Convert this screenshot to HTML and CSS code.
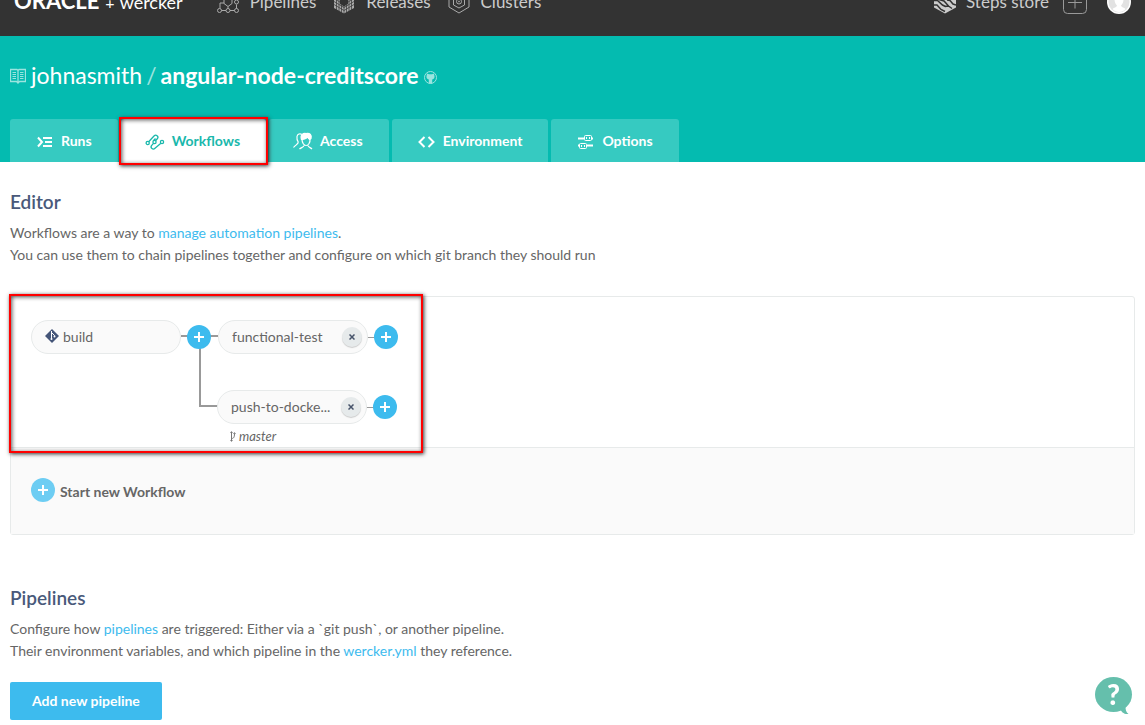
FILE: index.html
```
<!DOCTYPE html>
<html lang="en">
<head>
<meta charset="utf-8">
<title>Workflows - angular-node-creditscore</title>
<link rel="stylesheet" href="styles.css">
</head>
<body>
<header class="topbar">
  <div class="topbar-inner">
    <a class="brand" href="#"><span class="brand-oracle">ORACLE</span><span class="brand-plus">+</span><span class="brand-wercker">wercker</span></a>
    <nav class="topnav">
      <a class="topnav-link" href="#">
        <svg class="topnav-icon" width="22" height="24" viewBox="0 0 22 24" fill="none" stroke="currentColor"><circle cx="2.500" cy="20.500" r="2"/><circle cx="11" cy="20.500" r="2"/><circle cx="19.500" cy="20.500" r="2"/><path d="M4.500 20.500H9M13 20.500h4.500M3 18.500V13h4M19.500 18.500v-4M7 9.500v4l4 3 4-3v-4M11 16.500v2"/><circle cx="19.500" cy="12" r="2"/><path d="M6 2h10v7H6z"/></svg>
        <span>Pipelines</span></a>
      <a class="topnav-link" href="#">
        <svg class="topnav-icon" width="22" height="24" viewBox="0 0 22 24"><path d="M1 5l6 3v6l4 2.500 4-2.500V8l6-3v13l-10 5.500L1 18z" fill="currentColor"/><path d="M3.500 6v14M6 7v14M8.500 15v8M11 16v8M13.500 15v8M16 7v14M18.500 6v14M1 8.500l10 6 10-6M1 11.500l10 6 10-6M1 14.500l10 6 10-6" fill="none" stroke="#333" stroke-width=".7"/></svg>
        <span>Releases</span></a>
      <a class="topnav-link" href="#">
        <svg class="topnav-icon" width="22" height="24" viewBox="0 0 22 24" fill="none" stroke="currentColor"><path d="M11 1 1 6.500v10.500l10 6 10-6v-10.500z"/><path d="M11 5 5.500 8.500v6.500L11 18l5.500-3v-6.500z"/><circle cx="11" cy="11.500" r="2.500"/><circle cx="11" cy="11.500" r=".5"/></svg>
        <span>Clusters</span></a>
    </nav>
    <div class="account">
      <a class="topnav-link steps-link" href="#">
        <svg class="topnav-icon" width="22" height="24" viewBox="0 0 22 24"><path d="M0 6 11 0l11 6v11.500L11 23.500 0 17.500z" fill="currentColor"/><path d="M0 10.500h3.500L8.500 15l3 1.500M0 15h3l4 4.500 4 2M5 9.500l5 1.500 4.500 5 3.500 2.500M11 16.500l3.500-.5M13 10l3 .5 3 3.500 3 1" fill="none" stroke="#333" stroke-width="1.500"/></svg>
        <span>Steps store</span></a>
      <button class="add-button" type="button" aria-label="Add"><svg width="24" height="24" viewBox="0 0 24 24" fill="none" stroke="currentColor"><rect x=".5" y=".5" width="23" height="23" rx="4"/><path d="M12 5.500v13M5 12.500h14"/></svg></button>
      <a class="avatar" href="#" aria-label="Account"><svg width="24" height="24" viewBox="0 0 24 24"><circle cx="12" cy="12" r="12" fill="#fff"/><circle cx="12" cy="12" r="10.500" fill="#e2e2e2"/><path d="M12 4c-3 0-4.500 2-4.500 5s1 5 2.500 6.500c-.5 2-3 2-4.500 3.500 3 4 10 4 13 0-1.500-1.500-4-1.500-4.500-3.500 1.500-1.500 2.500-3.500 2.500-6.500S15 4 12 4z" fill="#fff"/></svg></a>
    </div>
  </div>
</header>

<section class="project">
  <h1 class="project-title">
    <svg class="book-icon" width="16" height="16" viewBox="0 0 16 16" fill="none" stroke="currentColor"><path d="M.5 1.500H7L8 2.500 9 1.500h6.500v12H9.500L8 15l-1.500-1.500h-6zM8 2.500V15" stroke-width="1.300"/><path d="M2.500 4.500H6M2.500 6.500H6M2.500 8.500H6M2.500 10.500H6M10 4.500h3.500M10 6.500h3.500M10 8.500h3.500M10 10.500h3.500"/></svg>
    <a class="owner" href="#">johnasmith</a><span class="slash">/</span><a class="repo" href="#">angular-node-creditscore</a>
    <svg class="github-icon" width="13" height="13" viewBox="0 0 13 13"><circle cx="6.500" cy="6.500" r="6" fill="none" stroke="currentColor"/><path d="M3 2.500 5 3.300h3l2-.8.4 2.200c.6 2-.4 3.300-2.200 3.800V12.500H4.800V8.500C3 8 2 6.700 2.600 4.700z" fill="currentColor"/></svg>
  </h1>
  <nav class="tabs">
    <a class="tab" href="#"><svg class="tab-icon" width="20" height="20" viewBox="0 0 20 20" fill="none" stroke="currentColor" stroke-width="2"><path d="m4 6.500 4 4.500-4 4.500M9 7h9M11 11h7M9 15h9"/></svg>Runs</a>
    <a class="tab tab-active" href="#"><svg class="tab-icon" width="20" height="20" viewBox="0 0 20 20" fill="none" stroke="currentColor" stroke-width="1.300"><circle cx="2.700" cy="12" r="1.600"/><circle cx="9.500" cy="11" r="1.600"/><circle cx="17" cy="11" r="1.600"/><path d="M3.700 10.700 9 5c2-2 5 .3 3.500 2.500L10.500 9.700M8.500 12.300 6.500 14.700c-1.500 2.300 1.500 4.500 3.500 2.500L15.900 12.200M8.400 9.800 10.500 7.500"/></svg>Workflows<span class="highlight highlight-tab" aria-hidden="true"></span></a>
    <a class="tab" href="#"><svg class="tab-icon" width="20" height="20" viewBox="0 0 20 20" fill="none" stroke="currentColor" stroke-width="1.200"><path d="M9 3.500C7 2 4.500 3 4 5.500c-.3 2 .2 4 1.200 5.500.3 2-2.700 3-4.700 5.500M17 8c.5 4-2 6.500-4 6.500S9 12 9 8c2 .5 4.500-.5 5.500-2 .5 1 1.500 1.700 2.500 2zM11 14.500c0 1.700-3 2-4.500 3.500M15 14.500c0 1.700 2.500 2 4 3.500"/><path d="M8.500 8.500C7 4 10 2 13 2.500c4-1 6 2 5 5l-1.500 1-2-2.500c-1.500 1.500-4 2-6 2.500z" fill="currentColor"/></svg>Access</a>
    <a class="tab" href="#"><svg class="tab-icon" width="20" height="20" viewBox="0 0 20 20" fill="none" stroke="currentColor" stroke-width="2"><path d="M8.500 6 3.500 11l5 5M12.500 6l5 5-5 5"/></svg>Environment</a>
    <a class="tab" href="#"><svg class="tab-icon" width="20" height="20" viewBox="0 0 20 20" fill="none" stroke="currentColor"><path d="M3 7.500h6M16 7.500h2M3 14.500h2M12 14.500h6" stroke-width="2"/><rect x="9.500" y="4.500" width="7" height="5" rx="1"/><rect x="4.500" y="12.500" width="7" height="5" rx="1"/><path d="M11.500 6v2M14.500 6v2M6.500 14v2M9.500 14v2"/></svg>Options</a>
  </nav>
</section>

<main class="content">
  <section class="editor">
    <h2 class="heading">Editor</h2>
    <p class="intro">Workflows are a way to <a class="link" href="#">manage automation pipelines</a>.<br>You can use them to chain pipelines together and configure on which git branch they should run</p>
    <div class="panel">
      <div class="canvas">
        <svg class="connectors" width="400" height="150" viewBox="0 0 400 150" fill="none" stroke="#999" stroke-width="2" aria-hidden="true"><path d="M170 39h37M189 39v70h18"/><path d="M356 40.500h8M355 110.500h8" stroke-width="1"/></svg>
        <div class="node node-build"><svg class="git-icon" width="14" height="14" viewBox="0 0 14 14"><path d="M7 0l7 7-7 7-7-7z" fill="#445578"/><path d="M6.500 2v8M7 4l2.500 2.500v1" fill="none" stroke="#fff"/><circle cx="6.500" cy="10" r="1" fill="#fff"/><circle cx="9.500" cy="7.500" r="1" fill="#fff"/></svg><span class="node-label">build</span></div>
        <button class="plus plus-build" type="button" aria-label="Add after build"><svg width="10" height="10" viewBox="0 0 10 10"><path d="M5 0v10M0 5h10" stroke="#fff" stroke-width="2"/></svg></button>
        <div class="node node-test"><span class="node-label">functional-test</span><button class="remove" type="button" aria-label="Remove functional-test"><svg width="6" height="6" viewBox="0 0 6 6"><path d="m.5.5 5 5m0-5-5 5" stroke="#46536a" stroke-width="1.500"/></svg></button></div>
        <button class="plus plus-test" type="button" aria-label="Add after functional-test"><svg width="10" height="10" viewBox="0 0 10 10"><path d="M5 0v10M0 5h10" stroke="#fff" stroke-width="2"/></svg></button>
        <div class="node node-push"><span class="node-label">push-to-docke...</span><button class="remove" type="button" aria-label="Remove push-to-docker"><svg width="6" height="6" viewBox="0 0 6 6"><path d="m.5.5 5 5m0-5-5 5" stroke="#46536a" stroke-width="1.500"/></svg></button></div>
        <button class="plus plus-push" type="button" aria-label="Add after push-to-docker"><svg width="10" height="10" viewBox="0 0 10 10"><path d="M5 0v10M0 5h10" stroke="#fff" stroke-width="2"/></svg></button>
        <div class="branch"><svg width="6" height="11" viewBox="0 0 6 11" fill="none" stroke="#777"><path d="M1.500 1v9M1.500 7.500c2 0 3-1 3-5"/><circle cx="1.500" cy="1.500" r=".7"/><circle cx="4.500" cy="2.500" r=".7"/><circle cx="1.500" cy="9.500" r=".7"/></svg>master</div>
        <span class="highlight highlight-canvas" aria-hidden="true"></span>
      </div>
      <div class="panel-footer">
        <button class="start" type="button"><span class="start-plus"><svg width="10" height="10" viewBox="0 0 10 10"><path d="M5 0v10M0 5h10" stroke="#fff" stroke-width="2"/></svg></span><span class="start-label">Start new Workflow</span></button>
      </div>
    </div>
  </section>
  <section class="pipelines">
    <h2 class="heading">Pipelines</h2>
    <p class="intro">Configure how <a class="link" href="#">pipelines</a> are triggered: Either via a `git push`, or another pipeline.<br>Their environment variables, and which pipeline in the <a class="link" href="#">wercker.yml</a> they reference.</p>
    <button class="primary" type="button">Add new pipeline</button>
  </section>
</main>

<button class="help" type="button" aria-label="Help">
  <svg class="help-bubble" width="38" height="38" viewBox="0 0 38 38"><ellipse cx="18.500" cy="17.500" rx="18.500" ry="17.500" fill="#65bfac"/><path d="M25 31c1 4 4 6.500 8.500 6-2.500-2-3-4-3-8z" fill="#65bfac"/></svg>
  <span class="help-mark">?</span>
</button>
</body>
</html>
```
FILE: styles.css
```
* { box-sizing: border-box; }
body { margin: 0; background: #fff; color: #666; font: 14px/22px Lato, sans-serif; }
a { color: inherit; text-decoration: none; }
button { margin: 0; padding: 0; border: 0; background: none; color: inherit; font: inherit; cursor: pointer; }
svg { display: block; flex: none; }
h1, h2, p { margin: 0; }

.topbar { display: flex; align-items: flex-end; height: 36px; overflow: hidden; background: #333; color: #ccc; }
.topbar-inner { display: flex; flex: 1; align-items: center; height: 68px; padding: 0 14px; }
.brand { display: flex; align-items: baseline; color: #fff; }
.brand-oracle { font-size: 22px; font-weight: 700; }
.brand-plus { margin: 0 5px 0 6px; font-size: 16px; }
.brand-wercker { font-size: 18px; }
.topnav { display: flex; gap: 17px; margin-left: 34px; }
.topnav-link { display: flex; align-items: center; gap: 11px; font-size: 17px; }
.topnav-icon { color: #aaa; }
.account { display: flex; align-items: center; margin-left: auto; }
.steps-link { gap: 10px; }
.steps-link .topnav-icon { color: #ccc; }
.add-button { margin: 0 20px 0 14px; color: #999; }

.project { padding: 24px 10px 0; background: #04bbb0; color: #fff; }
.project-title { display: flex; align-items: center; height: 30px; font-size: 23px; font-weight: 400; line-height: 30px; }
.book-icon { margin: 2px 5px 0 0; color: #9be4df; }
.slash { margin: 0 4px; color: #9be4df; }
.repo { font-weight: 700; }
.github-icon { margin: 4px 0 0 5px; color: #9be4df; }
.tabs { display: flex; gap: 3px; margin-top: 29px; }
.tab { position: relative; display: flex; align-items: center; height: 43px; padding: 0 26px 0 24px; border-radius: 3px 3px 0 0; background: #36cac1; font-weight: 700; }
.tab-icon { margin-right: 7px; }
.tab-active { background: #fff; color: #1ab8ac; }

.highlight { position: absolute; border: 2px solid #f00; box-shadow: 1px 1px 4px #333, inset 1px 1px 4px #555; pointer-events: none; }
.highlight-tab { inset: -2px -2px -3px -2px; z-index: 1; }
.highlight-canvas { left: -2px; top: -3px; width: 414px; height: 159px; z-index: 1; }

.content { padding: 28px 10px 5px; }
.heading { color: #49597a; font-size: 19px; font-weight: 600; line-height: 24px; }
.intro { margin-top: 8px; }
.link { color: #3dbbee; }
.panel { margin-top: 30px; border: 1px solid #e7eaea; border-radius: 3px; }
.canvas { position: relative; height: 151px; border-bottom: 1px solid #e7eaea; }
.connectors { position: absolute; left: 0; top: 0; }
.node { position: absolute; display: flex; align-items: center; width: 150px; height: 34px; padding: 0 5px 0 13px; border: 1px solid #e7eaea; border-radius: 17px; background: #fafafa; }
.node-build { left: 20px; top: 23px; }
.node-test { left: 207px; top: 23px; }
.node-push { left: 206px; top: 93px; }
.git-icon { margin: 0 4px 3px 0; }
.remove { display: grid; place-items: center; width: 20px; height: 20px; margin-left: auto; border-radius: 50%; background: #e6eaeb; box-shadow: 0 1px 1px #ccc; }
.plus { position: absolute; }
.plus, .start-plus { display: grid; place-items: center; width: 24px; height: 24px; border-radius: 50%; background: #3dbbee; }
.plus-build { left: 176px; top: 28px; }
.plus-test { left: 363px; top: 28px; }
.plus-push { left: 362px; top: 98px; }
.branch { position: absolute; left: 219px; top: 128px; display: flex; align-items: center; gap: 3px; font-size: 13px; font-style: italic; }
.panel-footer { padding: 29px 20px 31px; background: #fafafa; }
.start { display: flex; align-items: center; gap: 5px; font-weight: 700; }
.start-plus { background: #6dcdf3; }
.start-label { padding-top: 4px; }
.pipelines { margin-top: 51px; }
.primary { height: 38px; margin-top: 20px; padding: 0 22px; border-radius: 2px; background: #3dbbee; color: #fff; font-weight: 700; }

.help { position: fixed; right: 12px; bottom: 10px; color: #fff; }
.help-mark { position: absolute; left: 0; top: 0; width: 37px; font-size: 28px; font-weight: 900; line-height: 35px; text-align: center; }
```
